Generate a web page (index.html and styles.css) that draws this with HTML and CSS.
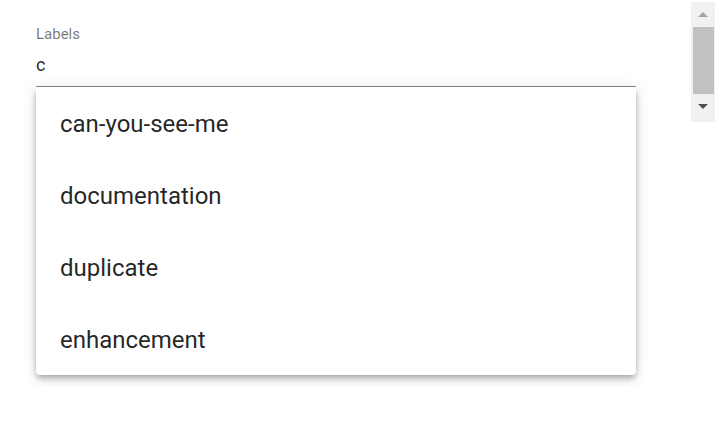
FILE: index.html
```html
<!DOCTYPE html>
<html>
<head>
<meta charset="utf-8">
<link rel="stylesheet" href="styles.css">
</head>
<body>
<div class="page">
  <div class="field">
    <label class="label">Labels</label>
    <div class="input">c</div>
    <ul class="menu">
      <li class="item">can-you-see-me</li>
      <li class="item">documentation</li>
      <li class="item">duplicate</li>
      <li class="item">enhancement</li>
    </ul>
  </div>
  <div class="scrollbar">
    <div class="arrow up"></div>
    <div class="thumb"></div>
    <div class="arrow down"></div>
  </div>
</div>
</body>
</html>
```
FILE: styles.css
```css
html, body {
  margin: 0;
  padding: 0;
  background: #fff;
  font-family: Roboto, "Noto Sans", sans-serif;
}
.page {
  display: flex;
  align-items: flex-start;
  width: 726px;
  height: 427px;
  box-sizing: border-box;
  padding: 2px 11px 0 36px;
}
.field {
  width: 600px;
  padding-top: 22px;
  display: flex;
  flex-direction: column;
}
.label {
  font-size: 15px;
  line-height: 20px;
  color: rgba(0, 0, 0, 0.54);
}
.input {
  font-size: 18px;
  line-height: 24px;
  height: 43px;
  padding-top: 9px;
  box-sizing: border-box;
  color: rgba(0, 0, 0, 0.87);
  border-bottom: 1px solid #8a8a8a;
}
.menu {
  list-style: none;
  margin: 0;
  padding: 1px 0 0;
  background: #fff;
  border-radius: 0 0 4px 4px;
  box-shadow: 0 3px 5px -1px rgba(0,0,0,0.2), 0 5px 8px 0 rgba(0,0,0,0.14), 0 1px 14px 0 rgba(0,0,0,0.12);
  height: 288px;
  box-sizing: border-box;
}
.item {
  height: 72px;
  display: flex;
  align-items: center;
  padding-left: 24px;
  font-size: 24px;
  color: rgba(0, 0, 0, 0.87);
}
.scrollbar {
  margin-left: auto;
  width: 24px;
  height: 120px;
  background: #f1f1f1;
  display: flex;
  flex-direction: column;
  align-items: center;
}
.arrow {
  width: 0;
  height: 0;
  border-left: 5px solid transparent;
  border-right: 5px solid transparent;
}
.arrow.up {
  margin-top: 10px;
  border-bottom: 5px solid #a3a3a3;
}
.arrow.down {
  margin-top: 10px;
  border-top: 5px solid #505050;
}
.thumb {
  width: 21px;
  margin-top: 10px;
  height: 67px;
  background: #c1c1c1;
}
```
